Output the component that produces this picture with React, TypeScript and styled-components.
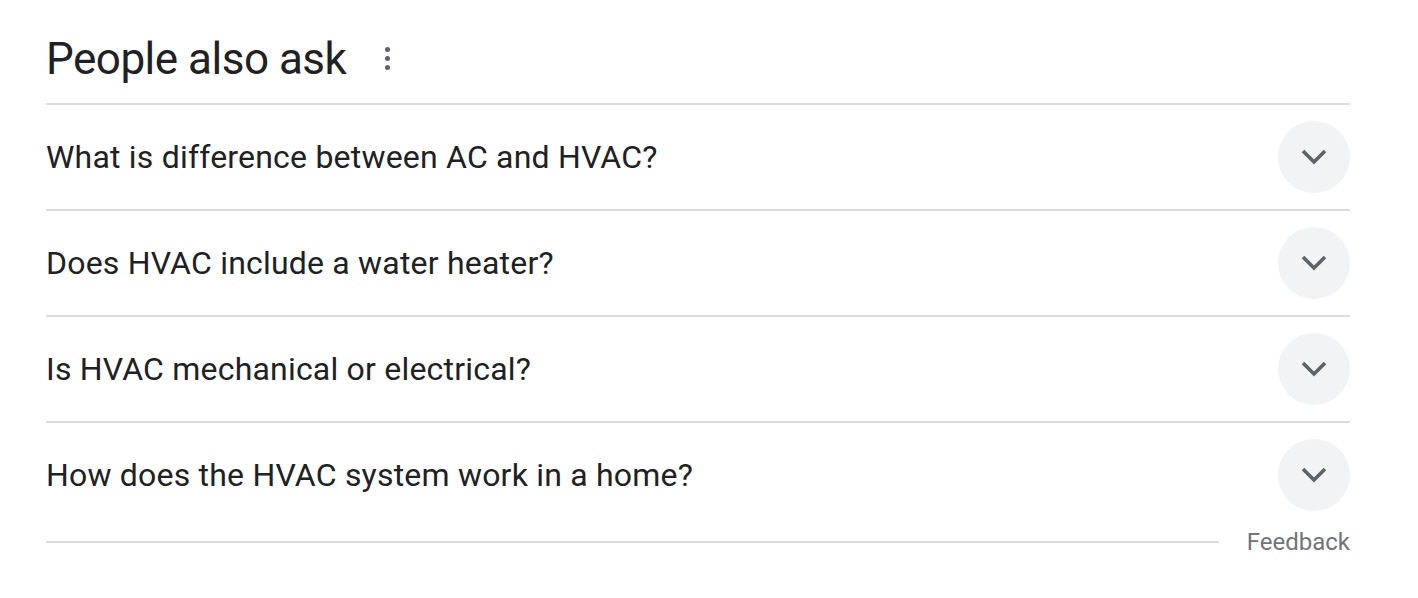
import React from "react";
import styled, { createGlobalStyle } from "styled-components";

const Global = createGlobalStyle`
  html, body { margin: 0; padding: 0; background: #fff; }
  body { font-family: Roboto, "Liberation Sans", sans-serif; color: #202124; }
`;

const Page = styled.div`
  padding: 0 68px 0 46px;
  width: 1304px;
`;

const Header = styled.div`
  display: flex;
  align-items: center;
  height: 103px;
  border-bottom: 2px solid #dadce0;
  box-sizing: content-box;
`;

const Title = styled.h2`
  margin: 0;
  font-family: Roboto, "Open Sans", sans-serif;
  font-weight: 400;
  font-size: 44px;
  line-height: 52px;
  letter-spacing: -0.5px;
  color: #202124;
  padding-top: 14px;
`;

const MenuButton = styled.div`
  margin-left: 36px;
  margin-top: 14px;
  display: flex;
  flex-direction: column;
  align-items: center;
  gap: 4px;
  width: 10px;
`;

const Dot = styled.span`
  width: 5px;
  height: 5px;
  border-radius: 50%;
  background: #5f6368;
`;

const Row = styled.div<{ $last?: boolean }>`
  display: flex;
  align-items: center;
  justify-content: space-between;
  height: 104px;
  border-bottom: ${(p) => (p.$last ? "none" : "2px solid #dadce0")};
  box-sizing: content-box;
`;

const Question = styled.span`
  font-family: Roboto, "Open Sans", sans-serif;
  font-size: 32px;
  line-height: 40px;
  letter-spacing: 0.2px;
  color: #202124;
`;

const Toggle = styled.div`
  width: 72px;
  height: 72px;
  border-radius: 50%;
  background: #f1f3f4;
  display: flex;
  align-items: center;
  justify-content: center;
`;

const Footer = styled.div`
  display: flex;
  align-items: center;
  height: 30px;
`;

const FooterLine = styled.div`
  flex: 1;
  height: 2px;
  background: #dadce0;
  margin-right: 28px;
`;

const Feedback = styled.span`
  font-family: Roboto, "Liberation Sans", sans-serif;
  font-size: 24px;
  line-height: 28px;
  color: #70757a;
`;

const Chevron = () => (
  <svg width="26" height="16" viewBox="0 0 26 16">
    <path d="M2 2 L13 13 L24 2" fill="none" stroke="#5f6368" strokeWidth="3.6" />
  </svg>
);

const questions = [
  "What is difference between AC and HVAC?",
  "Does HVAC include a water heater?",
  "Is HVAC mechanical or electrical?",
  "How does the HVAC system work in a home?",
];

export default function App() {
  return (
    <>
      <Global />
      <Page>
        <Header>
          <Title>People also ask</Title>
          <MenuButton>
            <Dot />
            <Dot />
            <Dot />
          </MenuButton>
        </Header>
        {questions.map((q, i) => (
          <Row key={q} $last={i === questions.length - 1}>
            <Question>{q}</Question>
            <Toggle>
              <Chevron />
            </Toggle>
          </Row>
        ))}
        <Footer>
          <FooterLine />
          <Feedback>Feedback</Feedback>
        </Footer>
      </Page>
    </>
  );
}
